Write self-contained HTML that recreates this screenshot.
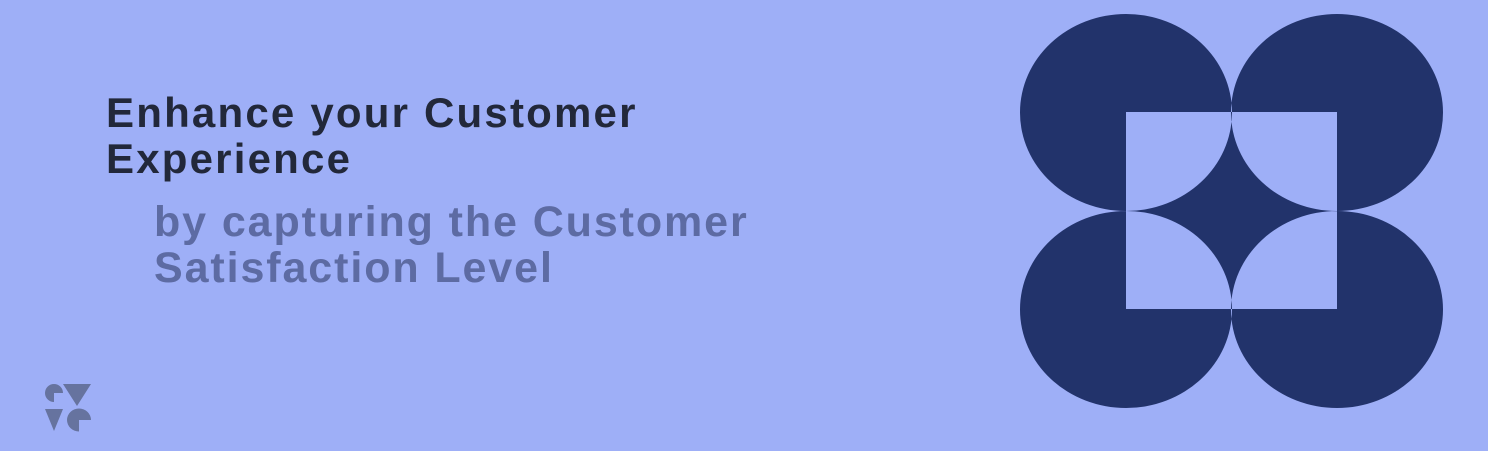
<!DOCTYPE html>
<html><head><meta charset="utf-8"><style>
html,body{margin:0;padding:0}
body{width:1488px;height:451px;background:#9eaff7;position:relative;overflow:hidden;font-family:"Liberation Sans",sans-serif}
.h{position:absolute;left:106px;top:90px;font-size:42px;line-height:46px;color:#22283a;font-weight:bold;letter-spacing:2.2px;white-space:nowrap}
.s{position:absolute;left:154px;top:199px;font-size:43px;line-height:46px;color:#5d6ba3;font-weight:bold;letter-spacing:1.9px;white-space:nowrap}
svg{position:absolute;left:0;top:0}
</style></head><body>
<div class="h">Enhance your Customer<br>Experience</div>
<div class="s">by capturing the Customer<br>Satisfaction Level</div>
<svg width="1488" height="451">
<path fill="#22336b" fill-rule="evenodd" d="
M1020,112.5a106,98.5 0 1,0 212,0a106,98.5 0 1,0 -212,0Z
M1231,112.5a106,98.5 0 1,0 212,0a106,98.5 0 1,0 -212,0Z
M1020,309.5a106,98.5 0 1,0 212,0a106,98.5 0 1,0 -212,0Z
M1231,309.5a106,98.5 0 1,0 212,0a106,98.5 0 1,0 -212,0Z
M1126,112H1337V309H1126Z"/>
<g fill="#66739f">
<path d="M54,393H63A9,9 0 1 0 54,402Z"/>
<path d="M63,384H91L77,406Z"/>
<path d="M45,409H63L54,431Z"/>
<path d="M79,420H91A12,11.5 0 1 0 79,431.5Z"/>
</g>
</svg>
</body></html>
